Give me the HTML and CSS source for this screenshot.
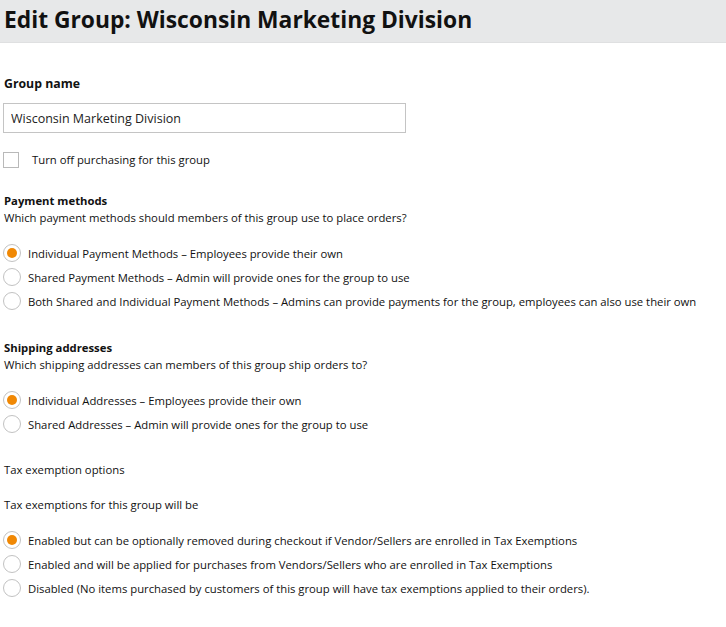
FILE: index.html
```html
<!DOCTYPE html>
<html lang="en">

<head>
    <meta charset="UTF-8">
    <meta name="viewport" content="width=device-width, initial-scale=1.0">
    <title>Edit Group</title>
    <link rel="stylesheet" href="styles.css">
</head>

<body>
    <div class="header">
        <h1>Edit Group: Wisconsin Marketing Division</h1>
    </div>

    <div class="form">
        <div class="label">Group name</div>
        <input class="name" type="text" value="Wisconsin Marketing Division">

        <label class="check">
            <span class="box"></span>
            <span>Turn off purchasing for this group</span>
        </label>

        <div class="section">
            <div class="label">Payment methods</div>
            <div class="question">Which payment methods should members of this group use to place orders?</div>
            <div class="options">
                <label class="radio"><span class="dot on"></span>Individual Payment Methods – Employees provide their own</label>
                <label class="radio"><span class="dot"></span>Shared Payment Methods – Admin will provide ones for the group to use</label>
                <label class="radio"><span class="dot"></span>Both Shared and Individual Payment Methods – Admins can provide payments for the group, employees can also use their own</label>
            </div>
        </div>

        <div class="section shipping">
            <div class="label">Shipping addresses</div>
            <div class="question">Which shipping addresses can members of this group ship orders to?</div>
            <div class="options">
                <label class="radio"><span class="dot on"></span>Individual Addresses – Employees provide their own</label>
                <label class="radio"><span class="dot"></span>Shared Addresses – Admin will provide ones for the group to use</label>
            </div>
        </div>

        <div class="section tax">
            <div class="plain">Tax exemption options</div>
            <div class="plain">Tax exemptions for this group will be</div>
            <div class="options">
                <label class="radio"><span class="dot on"></span>Enabled but can be optionally removed during checkout if Vendor/Sellers are enrolled in Tax Exemptions</label>
                <label class="radio"><span class="dot"></span>Enabled and will be applied for purchases from Vendors/Sellers who are enrolled in Tax Exemptions</label>
                <label class="radio"><span class="dot"></span>Disabled (No items purchased by customers of this group will have tax exemptions applied to their orders).</label>
            </div>
        </div>
    </div>
</body>

</html>
```

FILE: styles.css
```css
* {
    padding: 0;
    margin: 0;
    box-sizing: border-box;
}

body {
    font-family: "Open Sans", sans-serif;
    font-size: 11.3px;
    color: #111;
    background: #fff;
}

.header {
    height: 43px;
    background: #e7e8e9;
    border-bottom: 1px solid #dfe0e1;
    padding: 4px 4px 0;
}

.header h1 {
    font-size: 22.8px;
    font-weight: 700;
    line-height: 32px;
    color: #111;
}

.form {
    padding: 0 4px;
}

.label {
    font-weight: 700;
    line-height: 17px;
}

.form > .label {
    margin-top: 32px;
    font-size: 12.3px;
}

.name {
    display: block;
    width: 403px;
    height: 30px;
    margin: 11px 0 0 -1px;
    padding: 0 7px;
    border: 1px solid #c4c4c4;
    font-family: inherit;
    font-size: 12.5px;
    color: #222;
    outline: none;
}

.check {
    display: flex;
    align-items: center;
    gap: 13px;
    margin: 18px 0 0 -1px;
    line-height: 17px;
}

.box {
    width: 16px;
    height: 16px;
    border: 1px solid #b9b9b9;
    background: #fff;
}

.section {
    margin-top: 24px;
}

.section.shipping {
    margin-top: 29px;
}

.question {
    line-height: 17px;
}

.options {
    display: flex;
    flex-direction: column;
    gap: 6px;
    margin-top: 18px;
    margin-left: -1px;
}

.radio {
    display: flex;
    align-items: center;
    gap: 7px;
    height: 18px;
    white-space: nowrap;
}

.dot {
    flex: none;
    width: 18px;
    height: 18px;
    border: 1px solid #c2c2c2;
    border-radius: 50%;
    background: #fff;
    position: relative;
}

.dot.on::after {
    content: "";
    position: absolute;
    top: 3px;
    left: 3px;
    width: 10px;
    height: 10px;
    border-radius: 50%;
    background: #f08804;
}

.tax {
    margin-top: 28px;
}

.tax .plain {
    line-height: 17px;
    margin-bottom: 18px;
}

.tax .options {
    margin-top: 0;
}
```
